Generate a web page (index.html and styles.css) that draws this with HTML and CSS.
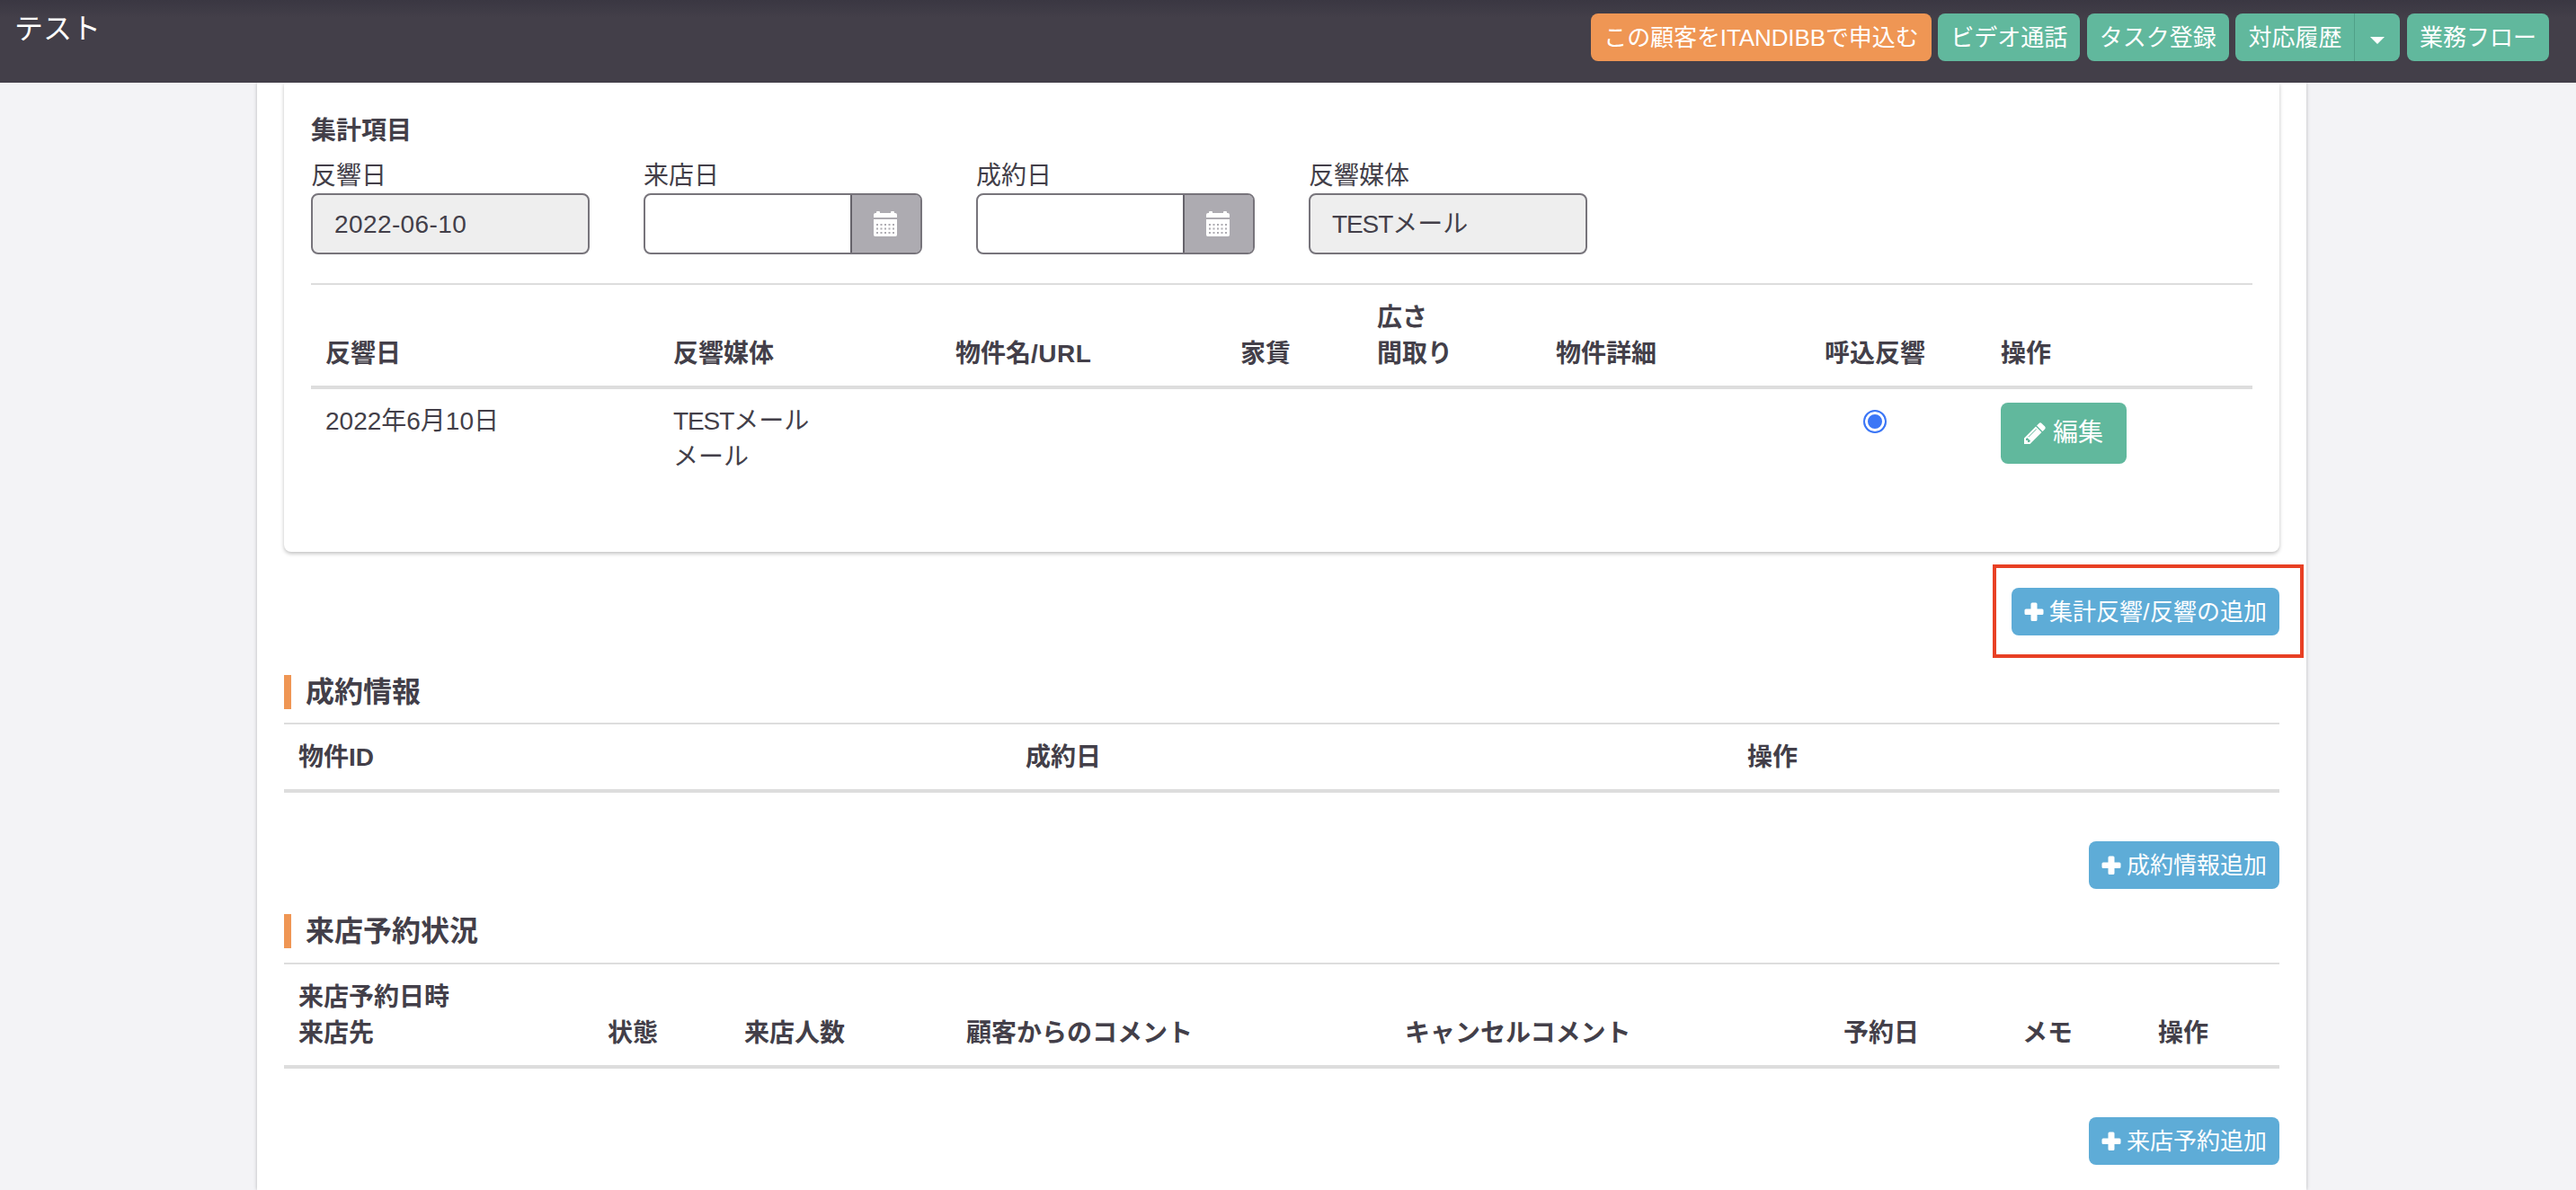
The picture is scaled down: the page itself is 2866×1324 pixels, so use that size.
FILE: index.html
```html
<!DOCTYPE html>
<html lang="ja">
<head>
    <meta charset="UTF-8">
    <title>テスト</title>
    <link rel="stylesheet" href="styles.css">
</head>
<body>
    <svg class="sprite">
        <symbol id="plus" viewBox="0 0 22 22">
            <path d="M9 0.5h4a1.5 1.5 0 0 1 1.5 1.500v5.500h5.500a1.500 1.500 0 0 1 1.500 1.500v3.500a1.500 1.500 0 0 1-1.500 1.500h-5.500v5.500a1.500 1.500 0 0 1-1.500 1.500h-4a1.500 1.500 0 0 1-1.500-1.500v-5.500h-5.500a1.500 1.500 0 0 1-1.500-1.500v-3.500a1.500 1.500 0 0 1 1.500-1.500h5.500v-5.500a1.500 1.500 0 0 1 1.500-1.500z"/>
        </symbol>
        <symbol id="pencil" viewBox="0 0 1536 1536">
            <path fill-rule="evenodd" d="M363 1408l91-91-235-235-91 91v107h128v128h107zM886 480c0-13-9-22-22-22-6 0-12 2-17 7l-542 542c-5 5-7 11-7 17 0 13 9 22 22 22 6 0 12-2 17-7l542-542c5-5 7-11 7-17zM832 288l416 416-832 832H0v-416zM1515 384c0 34-14 67-37 90l-166 166-416-416 165-165c24-24 57-38 91-38s67 14 91 38l235 234c23 24 37 57 37 91z"/>
        </symbol>
        <symbol id="calendar" viewBox="0 0 26 28">
            <path fill-rule="evenodd" d="M0 7V4q0-2 2-2h1V1q0-1 1-1h2q1 0 1 1v1h12V1q0-1 1-1h2q1 0 1 1v1h1q2 0 2 2v3zM0 9h26v17q0 2-1.500 2h-23q-1.500 0-1.500-2zM3 14v2h2v-2zM7.500 14v2h2v-2zM12 14v2h2v-2zM16.500 14v2h2v-2zM21 14v2h2v-2zM3 18.500v2h2v-2zM7.500 18.500v2h2v-2zM12 18.500v2h2v-2zM16.500 18.500v2h2v-2zM21 18.500v2h2v-2zM3 23v2h2v-2zM7.500 23v2h2v-2zM12 23v2h2v-2zM16.500 23v2h2v-2zM21 23v2h2v-2z"/>
        </symbol>
    </svg>

    <header class="navbar">
        <div class="customer-name">テスト</div>
        <div class="nav-buttons">
            <button class="btn btn-sm btn-warning">この顧客をITANDIBBで申込む</button>
            <button class="btn btn-sm btn-success">ビデオ通話</button>
            <button class="btn btn-sm btn-success">タスク登録</button>
            <div class="btn-group">
                <button class="btn btn-sm btn-success">対応履歴</button>
                <button class="btn btn-sm btn-success btn-toggle"><span class="caret"></span></button>
            </div>
            <button class="btn btn-sm btn-success">業務フロー</button>
        </div>
    </header>

    <main class="container">
        <section class="panel">
            <div class="panel-title">集計項目</div>
            <div class="fields">
                <div class="field">
                    <label>反響日</label>
                    <div class="input disabled date">2022-06-10</div>
                </div>
                <div class="field">
                    <label>来店日</label>
                    <div class="input"><span class="addon"><svg><use href="#calendar"/></svg></span></div>
                </div>
                <div class="field">
                    <label>成約日</label>
                    <div class="input"><span class="addon"><svg><use href="#calendar"/></svg></span></div>
                </div>
                <div class="field">
                    <label>反響媒体</label>
                    <div class="input disabled"><span class="latin">TEST</span>メール</div>
                </div>
            </div>

            <table class="table table-response">
                <colgroup><col><col><col><col><col><col><col><col></colgroup>
                <thead>
                    <tr>
                        <th>反響日</th>
                        <th>反響媒体</th>
                        <th>物件名<span class="url">/URL</span></th>
                        <th>家賃</th>
                        <th>広さ<br>間取り</th>
                        <th>物件詳細</th>
                        <th class="center">呼込反響</th>
                        <th>操作</th>
                    </tr>
                </thead>
                <tbody>
                    <tr>
                        <td>2022年6月10日</td>
                        <td><span class="latin">TEST</span>メール<br>メール</td>
                        <td></td>
                        <td></td>
                        <td></td>
                        <td></td>
                        <td class="center"><span class="radio"></span></td>
                        <td><button class="btn btn-success btn-edit"><svg><use href="#pencil"/></svg>編集</button></td>
                    </tr>
                </tbody>
            </table>
        </section>

        <div class="actions actions-response">
            <div class="highlighted">
                <button class="btn btn-sm btn-info"><svg><use href="#plus"/></svg>集計反響<span class="slash">/</span>反響の追加</button>
            </div>
        </div>

        <h2>成約情報</h2>
        <table class="table table-contract">
            <colgroup><col><col><col></colgroup>
            <thead>
                <tr>
                    <th>物件ID</th>
                    <th>成約日</th>
                    <th>操作</th>
                </tr>
            </thead>
        </table>
        <div class="actions">
            <button class="btn btn-sm btn-info"><svg><use href="#plus"/></svg>成約情報追加</button>
        </div>

        <h2 class="visit-title">来店予約状況</h2>
        <table class="table table-visit">
            <colgroup><col><col><col><col><col><col><col><col></colgroup>
            <thead>
                <tr>
                    <th>来店予約日時<br>来店先</th>
                    <th>状態</th>
                    <th>来店人数</th>
                    <th>顧客からのコメント</th>
                    <th>キャンセルコメント</th>
                    <th>予約日</th>
                    <th>メモ</th>
                    <th>操作</th>
                </tr>
            </thead>
        </table>
        <div class="actions">
            <button class="btn btn-sm btn-info"><svg><use href="#plus"/></svg>来店予約追加</button>
        </div>
    </main>
</body>
</html>
```
FILE: styles.css
```css
* { box-sizing: border-box; }
html, body { height: 100%; }
body { margin: 0; overflow: hidden; background-color: #f3f3f6; color: #433f49; font-family: "Liberation Sans", "Noto Sans CJK JP", sans-serif; font-size: 28px; line-height: 40px; }
.sprite { display: none; }
svg { fill: currentColor; flex: none; }

.navbar { position: relative; display: flex; justify-content: space-between; align-items: flex-start; height: 92px; padding: 0 30px 0 16px; color: #fff; background: linear-gradient(#3a3742, #433f49 20px); }
.customer-name { padding-top: 12px; font-size: 32px; }
.nav-buttons { display: flex; gap: 7.6px; padding-top: 15px; }

.btn { display: flex; align-items: center; border: 0; border-radius: 8px; color: #fff; font-family: inherit; white-space: nowrap; height: 68px; padding: 0 26px; font-size: 28px; line-height: 40px; }
.btn-sm { height: 53px; padding: 0 14px; font-size: 26px; }
.btn-warning { background-color: #ef9654; letter-spacing: -0.1px; }
.btn-success { background-color: #61b89d; }
.btn-info { background-color: #5eacd7; }
.btn-info svg { width: 22px; height: 22px; margin-right: 6px; }
.btn-edit { margin-top: -1px; }
.btn-edit svg { width: 24px; height: 24px; margin-right: 8px; }
.btn-group { display: flex; }
.btn-group .btn:first-child { border-radius: 8px 0 0 8px; }
.btn-group .btn-toggle { width: 51px; padding: 0; justify-content: center; border-left: 1px solid #4fa188; border-radius: 0 8px 8px 0; }
.caret { margin-top: 6px; border-top: 8px solid #fff; border-left: 8px solid transparent; border-right: 8px solid transparent; }

.container { width: 2280px; min-height: 1232px; margin-left: 286px; padding: 0 30px; background-color: #fff; box-shadow: 0 0 4px rgba(0, 0, 0, 0.25); }

.panel { height: 522px; padding: 34px 30px 0; border-radius: 0 0 8px 8px; box-shadow: 0 2px 4px rgba(0, 0, 0, 0.25); }
.panel-title { font-weight: bold; }
.fields { display: flex; gap: 60px; margin: 10px 0 32px; }
.field { width: 310px; }
.field label { display: block; height: 39px; }
.input { display: flex; height: 68px; padding: 13px 24px 11px; border: 2px solid #77747b; border-radius: 8px; background-color: #fff; }
.input.disabled { background-color: #eee; }
.date { letter-spacing: 0.4px; }
.latin { letter-spacing: -1.1px; }
.url { letter-spacing: 0.5px; }
.slash { width: 8px; text-align: center; }
.addon { display: flex; align-items: center; justify-content: center; width: 78px; margin: -13px -24px -11px auto; padding-right: 2px; border-left: 2px solid #65626a; border-radius: 0 5px 5px 0; background-color: #adabb1; color: #fff; }
.addon svg { width: 26px; height: 28px; }

.table { width: 100%; border-collapse: separate; border-spacing: 0; table-layout: fixed; }
.table th { padding: 17px 16px 15px; border-top: 2px solid #ddd; border-bottom: 4px solid #ddd; text-align: left; vertical-align: bottom; }
.table td { padding: 16px; vertical-align: top; }
.table .center { text-align: center; }
.table-response col:nth-child(1) { width: 387px; }
.table-response col:nth-child(2) { width: 314px; }
.table-response col:nth-child(3) { width: 317px; }
.table-response col:nth-child(4) { width: 152px; }
.table-response col:nth-child(5) { width: 199px; }
.table-response col:nth-child(6) { width: 247px; }
.table-response col:nth-child(7) { width: 248px; }
.table-contract col:nth-child(1) { width: 809px; }
.table-contract col:nth-child(2) { width: 803px; }
.table-visit col:nth-child(1) { width: 344px; }
.table-visit col:nth-child(2) { width: 152px; }
.table-visit col:nth-child(3) { width: 247px; }
.table-visit col:nth-child(4) { width: 488px; }
.table-visit col:nth-child(5) { width: 488px; }
.table-visit col:nth-child(6) { width: 199px; }
.table-visit col:nth-child(7) { width: 151px; }
.radio { display: inline-block; width: 26px; height: 26px; margin-top: 7px; border: 2px solid #3b76f6; border-radius: 50%; background-color: #3b76f6; box-shadow: inset 0 0 0 3px #fff; }

h2 { height: 38px; margin: 44px 0 15px; padding-left: 16px; border-left: 8px solid #ef9654; font-size: 32px; line-height: 39px; }
.visit-title { margin: 28px 0 16px; }
.actions { display: flex; justify-content: flex-end; margin-top: 54px; }
.actions-response { margin-top: 40px; }

/* red frame around the add button */
.highlighted { position: relative; }
.highlighted::after { content: ""; position: absolute; top: -26px; right: -27px; bottom: -25px; left: -21px; border: 4px solid #e84024; }
```
